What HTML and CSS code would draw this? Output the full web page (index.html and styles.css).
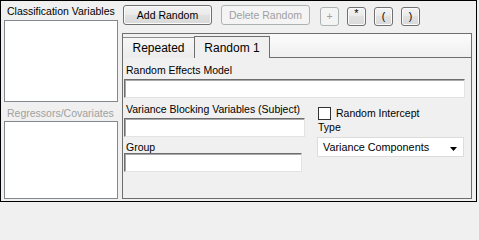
FILE: index.html
```html
<!DOCTYPE html>
<html>
<head>
<meta charset="utf-8">
<link rel="stylesheet" href="styles.css">
</head>
<body>
<div class="frame">
  <div class="left">
    <div class="lbl lbl-side">Classification Variables</div>
    <div class="listbox lb1"></div>
    <div class="lbl lbl-side lbl-disabled lbl-reg">Regressors/Covariates</div>
    <div class="listbox lb2"></div>
  </div>
  <div class="right">
    <div class="toolbar">
      <button class="btn btn-wide btn-add">Add Random</button>
      <button class="btn btn-wide btn-del" disabled>Delete Random</button>
      <div class="ops">
        <button class="btn btn-op" disabled>+</button>
        <button class="btn btn-op btn-star">*</button>
        <button class="btn btn-op">(</button>
        <button class="btn btn-op">)</button>
      </div>
    </div>
    <div class="tabbox">
      <div class="tabstrip">
        <div class="tab">Repeated</div>
        <div class="tab tab-active">Random 1</div>
        <div class="tabfill"></div>
      </div>
      <div class="tabpanel">
        <div class="lbl lbl-panel lbl-model">Random Effects Model</div>
        <div class="textbox tb-model"></div>
        <div class="lower">
          <div class="lower-left">
            <div class="lbl lbl-panel lbl-block">Variance Blocking Variables (Subject)</div>
            <div class="textbox tb-block"></div>
            <div class="lbl lbl-panel lbl-group">Group</div>
            <div class="textbox tb-group"></div>
          </div>
          <div class="lower-right">
            <div class="checkrow">
              <span class="checkbox"></span>
              <span class="lbl check-text">Random Intercept</span>
            </div>
            <div class="lbl lbl-type">Type</div>
            <div class="combo">
              <span class="combo-text">Variance Components</span>
              <svg class="combo-arrow" width="7" height="4" viewBox="0 0 7 4"><polygon points="0,0 7,0 3.5,4" fill="#000"/></svg>
            </div>
          </div>
        </div>
      </div>
    </div>
  </div>
</div>
</body>
</html>
```

FILE: styles.css
```css
html, body {
  margin: 0;
  padding: 0;
  background: #f0f0f0;
}
body {
  font-family: "Liberation Sans", Arial, sans-serif;
  font-size: 10.5px;
  color: #000;
}
.frame {
  box-sizing: border-box;
  width: 477px;
  height: 202px;
  border: 1px solid #000;
  display: flex;
  padding: 0 4px 0 3px;
  gap: 4px;
}
.lbl {
  font-size: 10.5px;
  line-height: 13px;
  height: 13px;
  white-space: nowrap;
}
.left {
  width: 114px;
  display: flex;
  flex-direction: column;
  padding-top: 4px;
}
.lbl-side {
  padding-left: 3px;
}
.lbl-disabled {
  color: #a0a0a0;
}
.listbox {
  box-sizing: border-box;
  border: 1px solid #828790;
  background: #fff;
}
.lb1 {
  margin-top: 2px;
  height: 82px;
}
.lbl-reg {
  margin-top: 5px;
}
.lb2 {
  margin-top: 1px;
  height: 78px;
}
.right {
  width: 350px;
  display: flex;
  flex-direction: column;
}
.toolbar {
  margin-top: 4px;
  height: 21px;
  display: flex;
  align-items: flex-start;
}
.btn {
  box-sizing: border-box;
  margin: 0;
  padding: 0;
  font-family: "Liberation Sans", Arial, sans-serif;
  font-size: 10.5px;
  color: #000;
  border: 1px solid #707070;
  border-radius: 3px;
  background: linear-gradient(#f4f4f4, #e9e9e9 50%, #e1e1e1 50%, #d9d9d9);
  box-shadow: inset 0 0 0 1px #fbfbfb;
}
.btn:disabled {
  border-color: #adb2b5;
  color: #a0a0a0;
  background: #f4f4f4;
  box-shadow: none;
}
.btn-wide {
  width: 89px;
  height: 20px;
  line-height: 18px;
}
.btn-add {
  margin-left: 1px;
}
.btn-del {
  margin-left: 9px;
}
.ops {
  margin-left: 10px;
  margin-top: 2px;
  display: flex;
  gap: 8px;
}
.btn-op {
  width: 19px;
  height: 19px;
  line-height: 17px;
  text-align: center;
}
.btn-star {
  line-height: 11px;
  font-size: 11px;
  padding-bottom: 6px;
}
.tabbox {
  margin-top: 7px;
  box-sizing: border-box;
  height: 166px;
  border: 1px solid #6e6e6e;
  display: flex;
  flex-direction: column;
  background: #f0f0f0;
}
.tabstrip {
  height: 24px;
  display: flex;
  align-items: flex-end;
}
.tab {
  box-sizing: border-box;
  width: 71px;
  height: 21px;
  border-top: 1px solid #8e8e8e;
  padding-top: 4px;
  font-size: 12px;
  line-height: 13px;
  text-align: center;
  background: linear-gradient(#f6f6f6, #ececec);
  white-space: nowrap;
}
.tab-active {
  width: 76px;
  height: 22px;
  border: 1px solid #6e6e6e;
  border-bottom: none;
  padding-top: 5px;
  background: #f0f0f0;
}
.tabfill {
  box-sizing: border-box;
  flex: 1;
  height: 24px;
  border-bottom: 1px solid #6e6e6e;
  background: linear-gradient(#fcfcfc, #efefef);
}
.tabpanel {
  flex: 1;
  padding-left: 1px;
  display: flex;
  flex-direction: column;
}
.lbl-panel {
  padding-left: 2px;
}
.lbl-model {
  margin-top: 6px;
}
.textbox {
  box-sizing: border-box;
  height: 19px;
  background: #fff;
  border: 1px solid;
  border-color: #6d6d6d #e3e3e3 #e3e3e3 #6d6d6d;
  box-shadow: inset 1px 1px 0 #a9a9a9;
}
.tb-model {
  margin-top: 2px;
  width: 341px;
}
.lower {
  display: flex;
}
.lower-left {
  width: 181px;
  display: flex;
  flex-direction: column;
}
.lbl-block {
  margin-top: 5px;
}
.tb-block {
  margin-top: 2px;
  width: 181px;
}
.lbl-group {
  margin-top: 4px;
}
.tb-group {
  margin-top: -1px;
  width: 178px;
}
.lower-right {
  margin-left: 12px;
  display: flex;
  flex-direction: column;
}
.checkrow {
  margin-top: 9px;
  height: 13px;
  display: flex;
  align-items: center;
}
.checkbox {
  box-sizing: border-box;
  width: 13px;
  height: 13px;
  margin-left: 1px;
  border: 1px solid #333;
  background: #fff;
}
.check-text {
  margin-left: 5px;
}
.lbl-type {
  margin-top: 1px;
  padding-left: 1px;
}
.combo {
  box-sizing: border-box;
  margin-top: 3px;
  width: 147px;
  height: 20px;
  border: 1px solid #dcdcdc;
  background: #fff;
  display: flex;
  align-items: center;
  padding: 0 6px 0 5px;
}
.combo-text {
  font-size: 10.8px;
  line-height: 13px;
  white-space: nowrap;
}
.combo-arrow {
  margin-left: auto;
  margin-top: 3px;
}
```
